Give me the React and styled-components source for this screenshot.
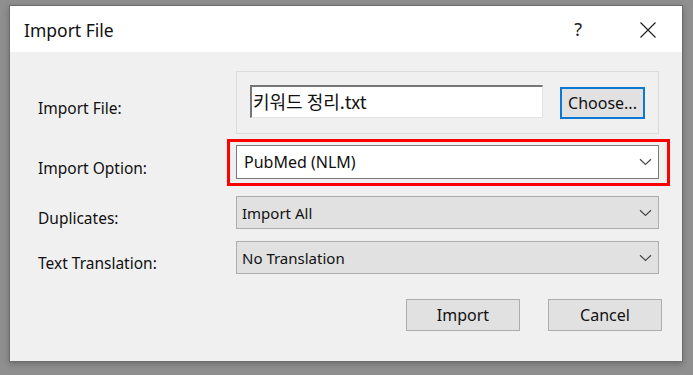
import React from "react";
import styled, { createGlobalStyle } from "styled-components";

const GlobalStyle = createGlobalStyle`
  html, body {
    margin: 0;
    padding: 0;
    background: #8f8f8f;
  }
  body {
    font-family: "Noto Sans", "Noto Sans CJK KR", sans-serif;
    color: #1a1a1a;
  }
`;

function Chevron() {
  return (
    <svg width="13" height="8" viewBox="0 0 13 8" fill="none">
      <path d="M1 1.2 L6.5 6.5 L12 1.2" stroke="#4a4a4a" strokeWidth="1.2" />
    </svg>
  );
}

function Combo({ value, $active, $highlight }) {
  return (
    <ComboBox $active={$active} $highlight={$highlight}>
      <span>{value}</span>
      <Chevron />
    </ComboBox>
  );
}

export default function App() {
  return (
    <>
      <GlobalStyle />
      <Desktop>
        <Dialog>
          <TitleBar>
            <Title>Import File</Title>
            <TitleButtons>
              <HelpButton>?</HelpButton>
              <CloseButton>
                <svg width="16" height="16" viewBox="0 0 16 16">
                  <path d="M0.5 0.5 L15.5 15.5 M15.5 0.5 L0.5 15.5" stroke="#222" strokeWidth="1.2" />
                </svg>
              </CloseButton>
            </TitleButtons>
          </TitleBar>

          <Body>
            <Row $h={63}>
              <Label>Import File:</Label>
              <GroupBox>
                <FileInput>키워드 정리.txt</FileInput>
                <ChooseButton>Choose...</ChooseButton>
              </GroupBox>
            </Row>
            <Row $h={34} $gap={11}>
              <Label>Import Option:</Label>
              <Combo value="PubMed (NLM)" $active $highlight />
            </Row>
            <Row $h={32} $gap={17}>
              <Label>Duplicates:</Label>
              <Combo value="Import All" />
            </Row>
            <Row $h={32} $gap={13}>
              <Label>Text Translation:</Label>
              <Combo value="No Translation" />
            </Row>

            <Actions>
              <Button>Import</Button>
              <Button>Cancel</Button>
            </Actions>
          </Body>
        </Dialog>
      </Desktop>
    </>
  );
}

const Desktop = styled.div`
  width: 693px;
  height: 375px;
  padding: 5px 0 0 9px;
  box-sizing: border-box;
  background: #8f8f8f;
`;

const Dialog = styled.div`
  width: 674px;
  height: 357px;
  box-sizing: border-box;
  border: 1px solid #6c6c6c;
  background: #f0f0f0;
  box-shadow: 0 2px 6px rgba(0, 0, 0, 0.25);
  display: flex;
  flex-direction: column;
`;

const TitleBar = styled.div`
  height: 46px;
  background: #ffffff;
  display: flex;
  align-items: center;
  justify-content: space-between;
  padding: 0 26px 0 14px;
`;

const Title = styled.div`
  font-size: 17.5px;
  color: #111;
  padding-top: 2px;
`;

const TitleButtons = styled.div`
  display: flex;
  align-items: center;
  gap: 58px;
`;

const HelpButton = styled.span`
  font-size: 18px;
  color: #222;
`;

const CloseButton = styled.span`
  display: flex;
  padding-top: 2px;
`;

const Body = styled.div`
  flex: 1;
  padding: 19px 23px 0 28px;
  display: flex;
  flex-direction: column;
`;

const Row = styled.div`
  display: grid;
  grid-template-columns: 198px 1fr;
  align-items: center;
  height: ${(p) => p.$h}px;
  margin-top: ${(p) => p.$gap || 0}px;
`;

const Label = styled.div`
  font-size: 15.5px;
  color: #111;
  padding-top: 11px;
`;

const GroupBox = styled.div`
  height: 100%;
  box-sizing: border-box;
  border: 1px solid #dcdcdc;
  display: flex;
  align-items: flex-start;
  padding: 13px 11px 0 13px;
  gap: 17px;
`;

const FileInput = styled.div`
  width: 293px;
  height: 33px;
  box-sizing: border-box;
  background: #fff;
  border-top: 2px solid #767676;
  border-left: 2px solid #767676;
  border-right: 1px solid #e3e3e3;
  border-bottom: 1px solid #e3e3e3;
  font-family: "Noto Sans CJK KR", "Noto Sans", sans-serif;
  font-size: 18px;
  line-height: 28px;
  padding-left: 1px;
  color: #111;
`;

const ChooseButton = styled.button`
  margin-top: 2px;
  width: 85px;
  height: 32px;
  box-sizing: border-box;
  background: #e1e1e1;
  border: 2px solid #0a78d4;
  font-family: "Noto Sans", sans-serif;
  font-size: 16px;
  color: #111;
  padding: 0;
`;

const ComboBox = styled.div`
  position: relative;
  height: 100%;
  box-sizing: border-box;
  background: ${(p) => (p.$active ? "#ffffff" : "#e1e1e1")};
  border: 1px solid ${(p) => (p.$active ? "#7a7a7a" : "#adadad")};
  display: flex;
  align-items: center;
  justify-content: space-between;
  padding: 0 6px 0 ${(p) => (p.$active ? 7 : 5)}px;
  font-size: ${(p) => (p.$active ? 16 : 15)}px;
  color: #111;

  ${(p) =>
    p.$highlight &&
    `
    &::after {
      content: "";
      position: absolute;
      top: -7px;
      bottom: -8px;
      left: -10px;
      right: -12px;
      border: 3px solid #ff0000;
      pointer-events: none;
    }
  `}
`;

const Actions = styled.div`
  display: flex;
  justify-content: flex-end;
  gap: 28px;
  margin-top: 26px;
  margin-right: -3px;
`;

const Button = styled.button`
  width: 114px;
  height: 32px;
  box-sizing: border-box;
  background: #e1e1e1;
  border: 1px solid #adadad;
  font-family: "Noto Sans", sans-serif;
  font-size: 16px;
  color: #111;
  padding: 0;
`;
